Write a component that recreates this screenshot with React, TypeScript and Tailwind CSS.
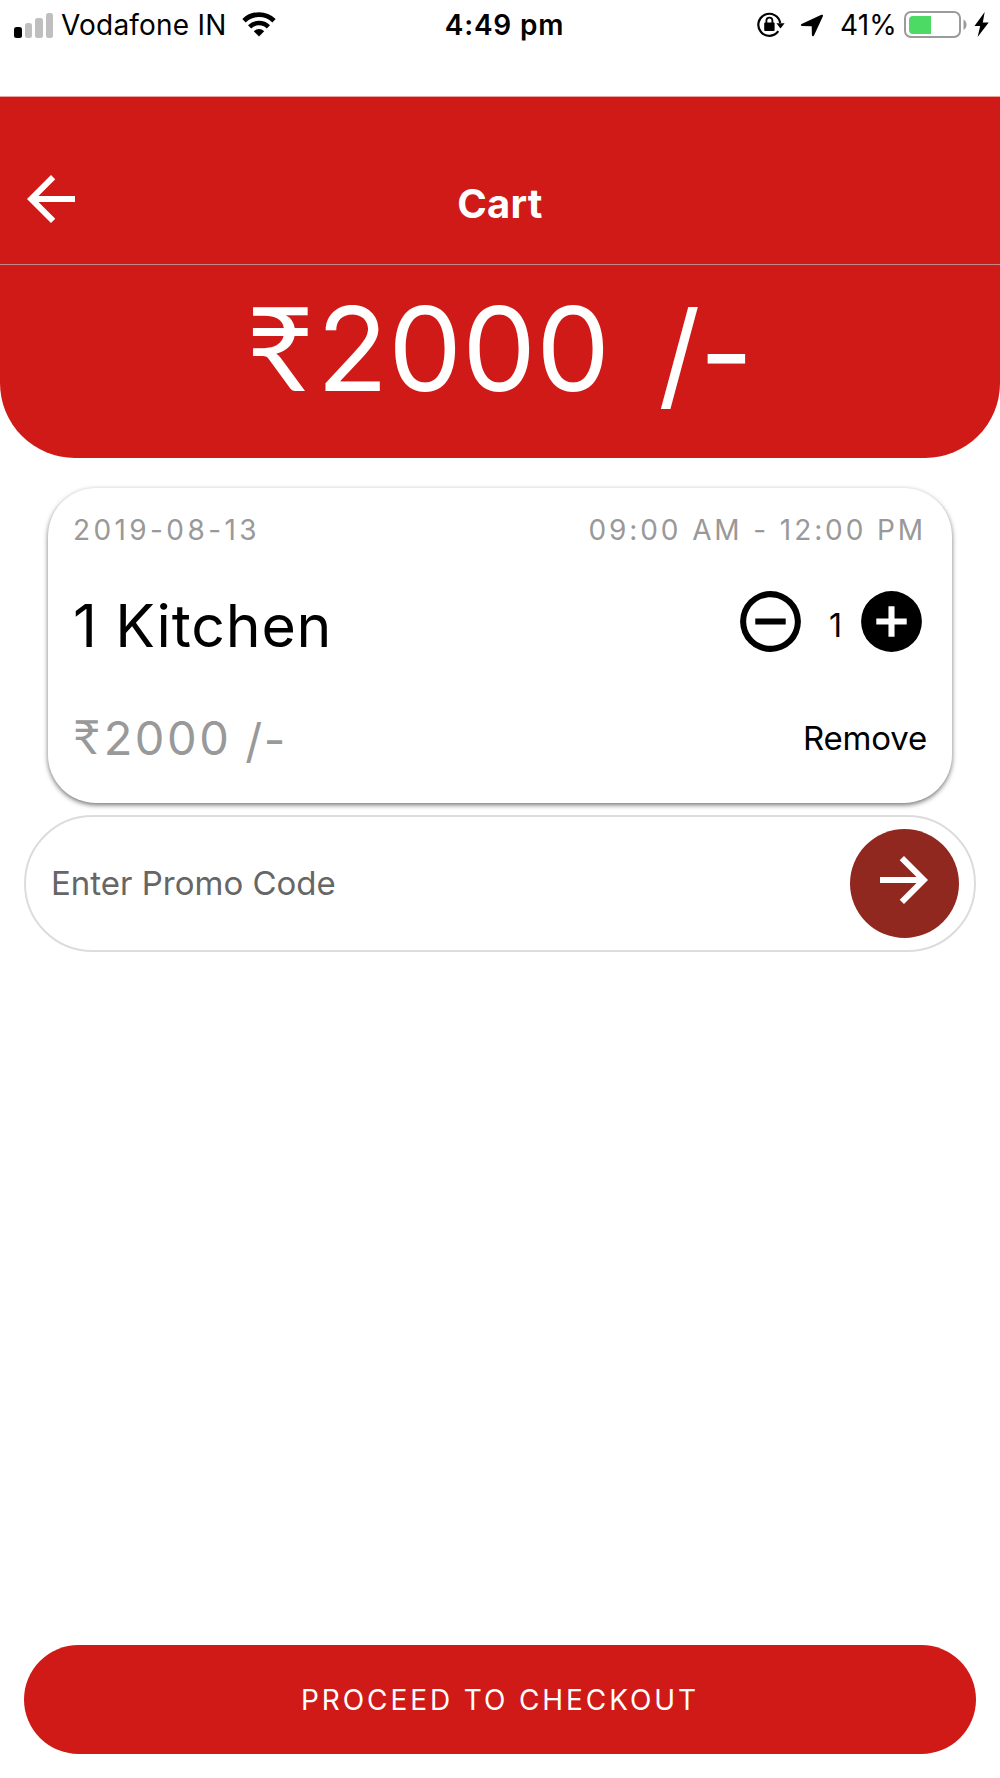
import { useState } from "react";

interface IconProps {
  path: string;
  className?: string;
}

const ICONS = {
  back: "M20 11v2H7.83l5.59 5.59L12 20l-8-8 8-8 1.42 1.41L7.83 11H20z",
  forward: "M4 11v2h12.17l-5.59 5.59L12 20l8-8-8-8-1.42 1.41L16.17 11H4z",
  minus:
    "M12 20c-4.41 0-8-3.59-8-8s3.59-8 8-8 8 3.59 8 8-3.59 8-8 8m0-18A10 10 0 0 0 2 12a10 10 0 0 0 10 10 10 10 0 0 0 10-10A10 10 0 0 0 12 2M7 13h10v-2H7v2z",
  plus: "M17 13h-4v4h-2v-4H7v-2h4V7h2v4h4m-5-9A10 10 0 0 0 2 12a10 10 0 0 0 10 10 10 10 0 0 0 10-10A10 10 0 0 0 12 2z",
};

const Icon = ({ path, className }: IconProps) => (
  <svg viewBox="0 0 24 24" fill="currentColor" className={className}>
    <path d={path} />
  </svg>
);

const StatusBar = () => (
  <div className="flex h-[50px] items-center justify-between pl-[14px] pr-[11px] text-[28px] leading-none text-black">
    {/* --- Carrier --- */}
    <div className="flex w-[400px] items-center">
      <div className="flex h-[25px] items-end gap-[3px]">
        <span className="h-[11px] w-[7.5px] rounded-[2.5px] bg-black" />
        <span className="h-[15px] w-[7.5px] rounded-[2.5px] bg-[#bfbfbf]" />
        <span className="h-[20px] w-[7.5px] rounded-[2.5px] bg-[#bfbfbf]" />
        <span className="h-[25px] w-[7.5px] rounded-[2.5px] bg-[#bfbfbf]" />
      </div>
      <span className="ml-[8px] whitespace-nowrap tracking-[0.2px]">
        Vodafone IN
      </span>
      <svg viewBox="0 0 34 25" className="ml-[16px] mt-[-1px] h-[25px] w-[34px]">
        <path
          d="M2 8.7a21.5 21.5 0 0 1 30 0"
          fill="none"
          stroke="black"
          strokeWidth="4.8"
        />
        <path
          d="M7.6 14.8a13.5 13.5 0 0 1 18.8 0"
          fill="none"
          stroke="black"
          strokeWidth="4.6"
        />
        <path d="M11.8 19.2a7.5 7.5 0 0 1 10.4 0L17 24.5z" fill="black" />
      </svg>
    </div>

    <span className="ml-[6px] whitespace-nowrap font-semibold tracking-[0.8px]">
      4:49 pm
    </span>

    {/* --- Indicators --- */}
    <div className="flex w-[400px] items-center justify-end">
      <svg viewBox="0 0 28 25" className="mt-[-1px] h-[25px] w-[28px]">
        <path
          d="M21.3 19.2A11 11 0 1 1 23.2 11"
          fill="none"
          stroke="black"
          strokeWidth="2.2"
        />
        <path d="M19.4 11.2h8.2l-4.1 5.4z" fill="black" />
        <rect x="7.2" y="10.6" width="10.4" height="8.4" rx="1" fill="black" />
        <path
          d="M9.4 11V8.6a3 3 0 0 1 6 0V11"
          fill="none"
          stroke="black"
          strokeWidth="1.8"
        />
      </svg>
      <svg viewBox="0 0 24 23" className="ml-[15px] h-[23px] w-[24px]">
        <path
          d="M1.6 10 21.4.8c1.2-.4 2 .4 1.5 1.5L14 21.4c-.7 1.4-2 1-2.1-.3L11.7 12.2 2.2 11.9C.7 11.8.4 10.6 1.6 10z"
          fill="black"
        />
      </svg>
      <span className="ml-[16px] whitespace-nowrap tracking-[0.2px]">41%</span>
      <svg viewBox="0 0 64 28" className="ml-[7px] mt-[-1px] h-[28px] w-[64px]">
        <rect
          x="1"
          y="1"
          width="55"
          height="25"
          rx="6"
          fill="none"
          stroke="#9b9b9b"
          strokeWidth="2"
        />
        <path d="M9 5h18v18H9a4 4 0 0 1-4-4V9a4 4 0 0 1 4-4z" fill="#4cd964" />
        <path d="M59.5 8.5c4 2 4 8.5 0 10.5z" fill="#9b9b9b" />
      </svg>
      <svg viewBox="0 0 15 25" className="ml-[6px] mt-[-1px] h-[25px] w-[15px]">
        <path d="M10.7 0 .5 14h5.7L3.6 25 14.7 10.5H8.8z" fill="black" />
      </svg>
    </div>
  </div>
);

export default function App() {
  const [quantity, setQuantity] = useState(1);
  const [promo, setPromo] = useState("");

  return (
    <div className="flex h-[1778px] w-[1000px] flex-col overflow-hidden bg-white font-['Inter',sans-serif]">
      <div className="h-[96px] shrink-0">
        <StatusBar />
      </div>

      {/* --- Header --- */}
      <header className="h-[362px] shrink-0 rounded-b-[75px] bg-[#cf1a17] text-white">
        <div className="grid h-[169px] grid-cols-3 items-center border-b border-t border-b-[#c08a89] border-t-[#eda3a2] pt-[47px]">
          <button className="mt-[-11px] ml-[15px] w-[72px]">
            <Icon path={ICONS.back} className="size-[72px]" />
          </button>
          <h1 className="text-center text-[40px] font-bold leading-none tracking-[0.2px]">
            Cart
          </h1>
        </div>
        <p className="flex h-[168px] items-center pl-[246px] text-[117px] leading-none">
          <span className="mt-[-6px] font-['Lato']">₹</span>
          <span className="ml-[3px] mt-[-1px] tracking-[0.2px]">2000</span>
          <span className="ml-[48px] mt-[9px]">/</span>
          <span className="ml-[-1px] mt-[6px]">-</span>
        </p>
      </header>

      {/* --- Cart item --- */}
      <section className="mx-[48px] mt-[30px] flex h-[315px] shrink-0 flex-col rounded-[48px] bg-white pl-[25px] pr-[25px] shadow-[0_2px_5px_rgba(0,0,0,0.55)]">
        <div className="mt-[22px] flex h-[40px] items-center justify-between text-[28px] leading-none text-[#999]">
          <span className="tracking-[3.4px]">2019-08-13</span>
          <span className="mr-[1px] tracking-[2.9px]">09:00 AM - 12:00 PM</span>
        </div>
        <div className="mt-[37px] flex h-[76px] items-center justify-between">
          <h2 className="text-[59px] leading-none tracking-[0.8px] text-black">
            {quantity} Kitchen
          </h2>
          <div className="mr-[-1px] flex items-center">
            <button onClick={() => setQuantity(Math.max(1, quantity - 1))}>
              <Icon path={ICONS.minus} className="mt-[-7px] size-[73px]" />
            </button>
            <span className="mt-[1px] w-[48px] pl-[9px] text-center text-[32px] leading-none">
              {quantity}
            </span>
            <button onClick={() => setQuantity(quantity + 1)}>
              <Icon path={ICONS.plus} className="mt-[-7px] size-[73px]" />
            </button>
          </div>
        </div>
        <div className="mt-[45px] flex h-[60px] items-center justify-between">
          <p className="flex items-center text-[47px] leading-none tracking-[2.5px] text-[#999]">
            <span className="mt-[-3px] font-['Lato']">₹</span>
            <span className="ml-[1px] mt-[-1px]">2000</span>
            <span className="ml-[14px] mt-[4px]">/</span>
            <span className="ml-[-1px] mt-[2px]">-</span>
          </p>
          <button className="text-[33px] leading-none tracking-[-0.2px] text-black">
            Remove
          </button>
        </div>
      </section>

      {/* --- Promo code --- */}
      <div className="mx-[24px] mt-[12px] flex h-[137px] shrink-0 items-center justify-between rounded-full border-2 border-[#dcdcdc] pl-[25px] pr-[15px]">
        <input
          value={promo}
          onChange={(e) => setPromo(e.target.value)}
          placeholder="Enter Promo Code"
          className="mt-[-1px] w-[600px] text-[33px] leading-[40px] outline-none placeholder:text-[#666]"
        />
        <button className="flex size-[109px] items-center justify-center rounded-full bg-[#91281f] text-white">
          <Icon path={ICONS.forward} className="mt-[-8px] mr-[2px] size-[72px]" />
        </button>
      </div>

      <button className="mx-[24px] mt-auto mb-[24px] h-[109px] shrink-0 rounded-full bg-[#cf1a17] text-[28px] leading-none tracking-[2.9px] text-white">
        PROCEED TO CHECKOUT
      </button>
    </div>
  );
}
